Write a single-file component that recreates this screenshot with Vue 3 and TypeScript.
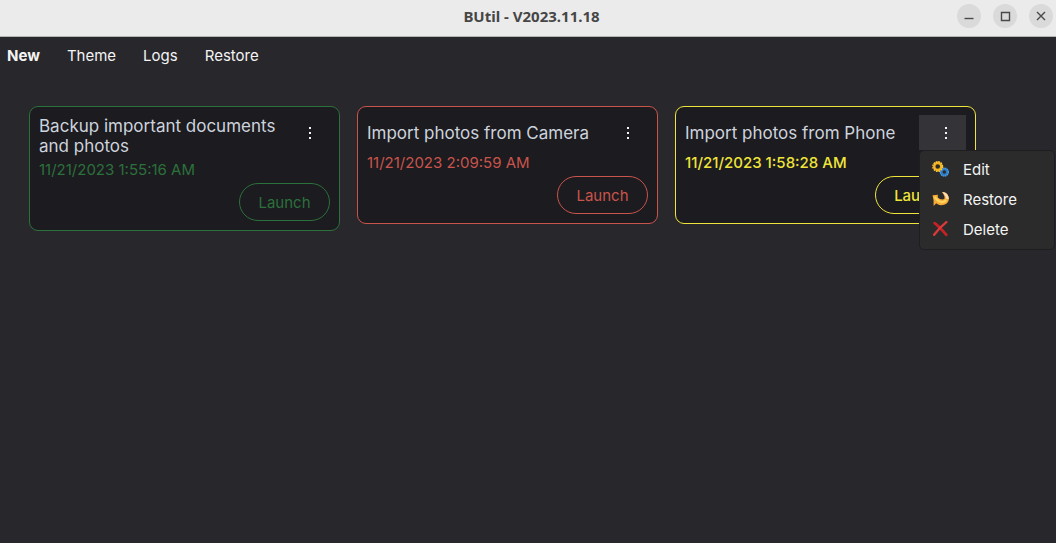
<script setup lang="ts">
interface Task {
  title: string
  date: string
  tone: 'ok' | 'failed' | 'running'
  open: boolean
}

const links: string[] = ['New', 'Theme', 'Logs', 'Restore']

const tasks: Task[] = [
  { title: 'Backup important documents and photos', date: '11/21/2023 1:55:16 AM', tone: 'ok', open: false },
  { title: 'Import photos from Camera', date: '11/21/2023 2:09:59 AM', tone: 'failed', open: false },
  { title: 'Import photos from Phone', date: '11/21/2023 1:58:28 AM', tone: 'running', open: true },
]
</script>

<template>
  <div class="window">
    <header class="titlebar">
      <h1 class="caption">BUtil - V2023.11.18</h1>
      <div class="controls">
        <button class="control" type="button" aria-label="Minimize">
          <svg viewBox="0 0 24 24"><path d="M7.5 14.5h9" /></svg>
        </button>
        <button class="control" type="button" aria-label="Maximize">
          <svg viewBox="0 0 24 24"><path d="M8.5 8.5h8v8h-8z" /></svg>
        </button>
        <button class="control" type="button" aria-label="Close">
          <svg viewBox="0 0 24 24"><path d="M8 8l8 8M16 8l-8 8" /></svg>
        </button>
      </div>
    </header>

    <nav class="menubar">
      <a v-for="(link, i) in links" :key="link" href="#" :class="{ primary: i === 0 }">{{ link }}</a>
    </nav>

    <main class="tasks">
      <article v-for="task in tasks" :key="task.title" class="card" :class="task.tone">
        <div class="head">
          <h2 class="title">{{ task.title }}</h2>
          <div class="more-wrap">
            <button class="more" :class="{ active: task.open }" type="button" aria-label="Task actions">
              <svg viewBox="0 0 4 14"><path d="M1 1h2v2H1zM1 6h2v2H1zM1 11h2v2H1z" /></svg>
            </button>
            <div v-if="task.open" class="menu">
              <button type="button" class="item">
                <svg viewBox="0 0 16 16">
                  <circle cx="11.6" cy="10.4" r="2.8" fill="none" stroke="#2c7cc8" stroke-width="2.4" />
                  <circle cx="11.6" cy="10.4" r="3.8" fill="none" stroke="#4a9fe0" stroke-width="1.2" stroke-dasharray="1.4 0.6" />
                  <circle cx="5.4" cy="5.2" r="3.3" fill="none" stroke="#f6b622" stroke-width="2.2" />
                  <circle cx="5.4" cy="5.2" r="4.6" fill="none" stroke="#ffc93c" stroke-width="1.2" stroke-dasharray="1.6 0.8" />
                </svg>
                Edit
              </button>
              <button type="button" class="item">
                <svg viewBox="0 0 16 16">
                  <path d="M0.5 4L5.500 3.500L5.500 6C7 7.500 9.500 8.500 11.500 7.500C12.500 6.500 11.500 4 9.500 1C13.500 1 16 4 15.800 8C15.500 11.500 12 13.500 8.500 13.300C6.500 13.100 5 12.500 4 11.500L1.500 14L1.500 9Z" fill="#f7ab34" />
                  <path d="M9.500 1C13.500 1 16 4 15.800 7.800L13 7C12.800 4.500 11.500 2.800 9.500 1Z" fill="#ffdcb4" />
                  <path d="M2.500 5.500L4.500 8C7 11 11 11.500 13.500 8.500" fill="none" stroke="#ffd45e" stroke-width="2" />
                </svg>
                Restore
              </button>
              <button type="button" class="item">
                <svg viewBox="0 0 16 16">
                  <path d="M2.5 2C6 4.500 10 9 13.500 13" fill="none" stroke="#c42224" stroke-width="2.6" stroke-linecap="round" />
                  <path d="M13.500 1C9 4.500 5 9 2 13" fill="none" stroke="#dc3a3a" stroke-width="2.2" stroke-linecap="round" />
                </svg>
                Delete
              </button>
            </div>
          </div>
        </div>
        <time class="date">{{ task.date }}</time>
        <button class="launch" type="button">Launch</button>
      </article>
    </main>
  </div>
</template>

<style>
body {
  background: #28272c;
}
</style>

<style scoped>
.window {
  display: flex;
  flex-direction: column;
  min-height: 100vh;
  box-sizing: border-box;
  background: #28272c;
  color: #f4f4f4;
  font-family: Inter, "Liberation Sans", sans-serif;
  font-size: 15px;
}

button {
  margin: 0;
  padding: 0;
  border: 0;
  background: none;
  color: inherit;
  font: inherit;
}

.titlebar {
  display: grid;
  grid-template-columns: 1fr auto 1fr;
  align-items: center;
  height: 37px;
  box-sizing: border-box;
  padding: 0 3px 4px 10px;
  border-bottom: 1px solid #b5b5b5;
  background: #ebebeb;
}

.caption {
  grid-column: 2;
  margin: 0;
  color: #464646;
  font: 700 15px/20px "Noto Sans", "Open Sans", sans-serif;
}

.controls {
  display: flex;
  justify-content: flex-end;
  gap: 12px;
}

.control {
  width: 24px;
  height: 24px;
  border-radius: 50%;
  background: #dadada;
}

.control svg {
  display: block;
  fill: none;
  stroke: #4a4a4a;
  stroke-width: 1.4;
}

.menubar {
  display: flex;
  gap: 27px;
  padding: 9px 7px 8px;
  line-height: 20px;
}

.menubar a {
  color: inherit;
  text-decoration: none;
}

.menubar .primary {
  font-weight: 700;
}

.tasks {
  display: flex;
  flex-wrap: wrap;
  align-items: flex-start;
  gap: 17px;
  padding: 32px 29px;
}

.card {
  display: flex;
  flex-direction: column;
  min-width: 301px;
  max-width: 311px;
  box-sizing: border-box;
  padding: 8px 9px 9px;
  border: 1px solid currentColor;
  border-radius: 9px;
  background: #1c1b1f;
}

.ok {
  color: #2b713c;
}

.failed {
  color: #c9544c;
}

.running {
  color: #efe53a;
}

.running .date,
.running .launch {
  font-weight: 500;
}

.head {
  display: flex;
  justify-content: space-between;
  align-items: flex-start;
}

.title {
  align-self: center;
  margin: 0;
  padding: 1px 0;
  color: #cdd3dd;
  font-size: 17px;
  font-weight: 400;
  line-height: 20px;
}

.more-wrap {
  position: relative;
  flex: none;
}

.more {
  display: flex;
  align-items: center;
  justify-content: center;
  width: 47px;
  height: 35px;
  padding-left: 7px;
  color: #f4f4f4;
}

.more.active {
  background: #343338;
}

.more svg {
  width: 4px;
  height: 14px;
  fill: currentColor;
}

.date {
  line-height: 26px;
}

.launch {
  align-self: flex-end;
  width: 91px;
  height: 38px;
  border: 1px solid currentColor;
  border-radius: 19px;
}

.menu {
  position: absolute;
  z-index: 1;
  top: 100%;
  left: 0;
  width: 136px;
  box-sizing: border-box;
  padding: 3px 0 5px;
  border: 1px solid #1e1e20;
  border-radius: 5px;
  background: #2b2b2b;
  color: #f4f4f4;
}

.item {
  display: flex;
  align-items: center;
  gap: 14px;
  width: 100%;
  height: 30px;
  padding-left: 12px;
}

.item svg {
  width: 17px;
  height: 17px;
}
</style>
